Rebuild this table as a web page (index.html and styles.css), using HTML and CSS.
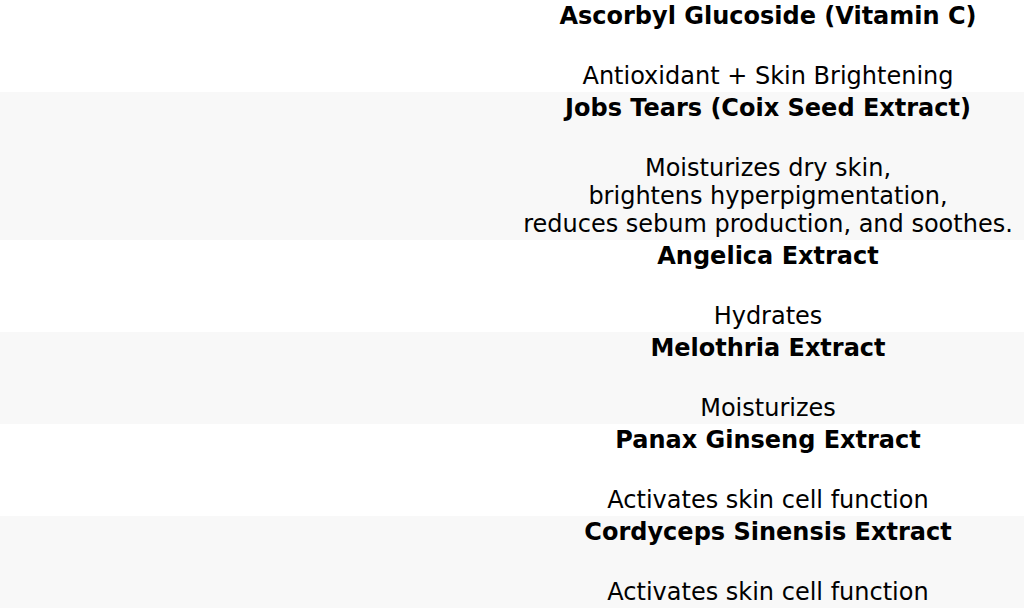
FILE: index.html
```html
<!DOCTYPE html>
<html>
<head>
<meta charset="utf-8">
<link rel="stylesheet" href="styles.css">
</head>
<body>
<div class="list">
  <div class="row">
    <div class="side"></div>
    <div class="cell"><div class="name">Ascorbyl Glucoside (Vitamin C)</div><div class="desc">Antioxidant + Skin Brightening</div></div>
  </div>
  <div class="row alt">
    <div class="side"></div>
    <div class="cell"><div class="name">Jobs Tears (Coix Seed Extract)</div><div class="desc">Moisturizes dry skin,<br>brightens hyperpigmentation,<br>reduces sebum production, and soothes.</div></div>
  </div>
  <div class="row">
    <div class="side"></div>
    <div class="cell"><div class="name">Angelica Extract</div><div class="desc">Hydrates</div></div>
  </div>
  <div class="row alt">
    <div class="side"></div>
    <div class="cell"><div class="name">Melothria Extract</div><div class="desc">Moisturizes</div></div>
  </div>
  <div class="row">
    <div class="side"></div>
    <div class="cell"><div class="name">Panax Ginseng Extract</div><div class="desc">Activates skin cell function</div></div>
  </div>
  <div class="row alt">
    <div class="side"></div>
    <div class="cell"><div class="name">Cordyceps Sinensis Extract</div><div class="desc">Activates skin cell function</div></div>
  </div>
</div>
</body>
</html>
```
FILE: styles.css
```css
html, body {
  margin: 0;
  padding: 0;
  background: #ffffff;
}
body {
  font-family: "DejaVu Sans", sans-serif;
  font-size: 24px;
  line-height: 28px;
  color: #000000;
}
.list {
  display: flex;
  flex-direction: column;
}
.row {
  display: grid;
  grid-template-columns: 1fr 1fr;
  background: #ffffff;
}
.row.alt {
  background: #f8f8f8;
}
.cell {
  text-align: center;
  padding: 2px 0;
}
.name {
  font-weight: bold;
}
.desc {
  margin-top: 32px;
}
```
